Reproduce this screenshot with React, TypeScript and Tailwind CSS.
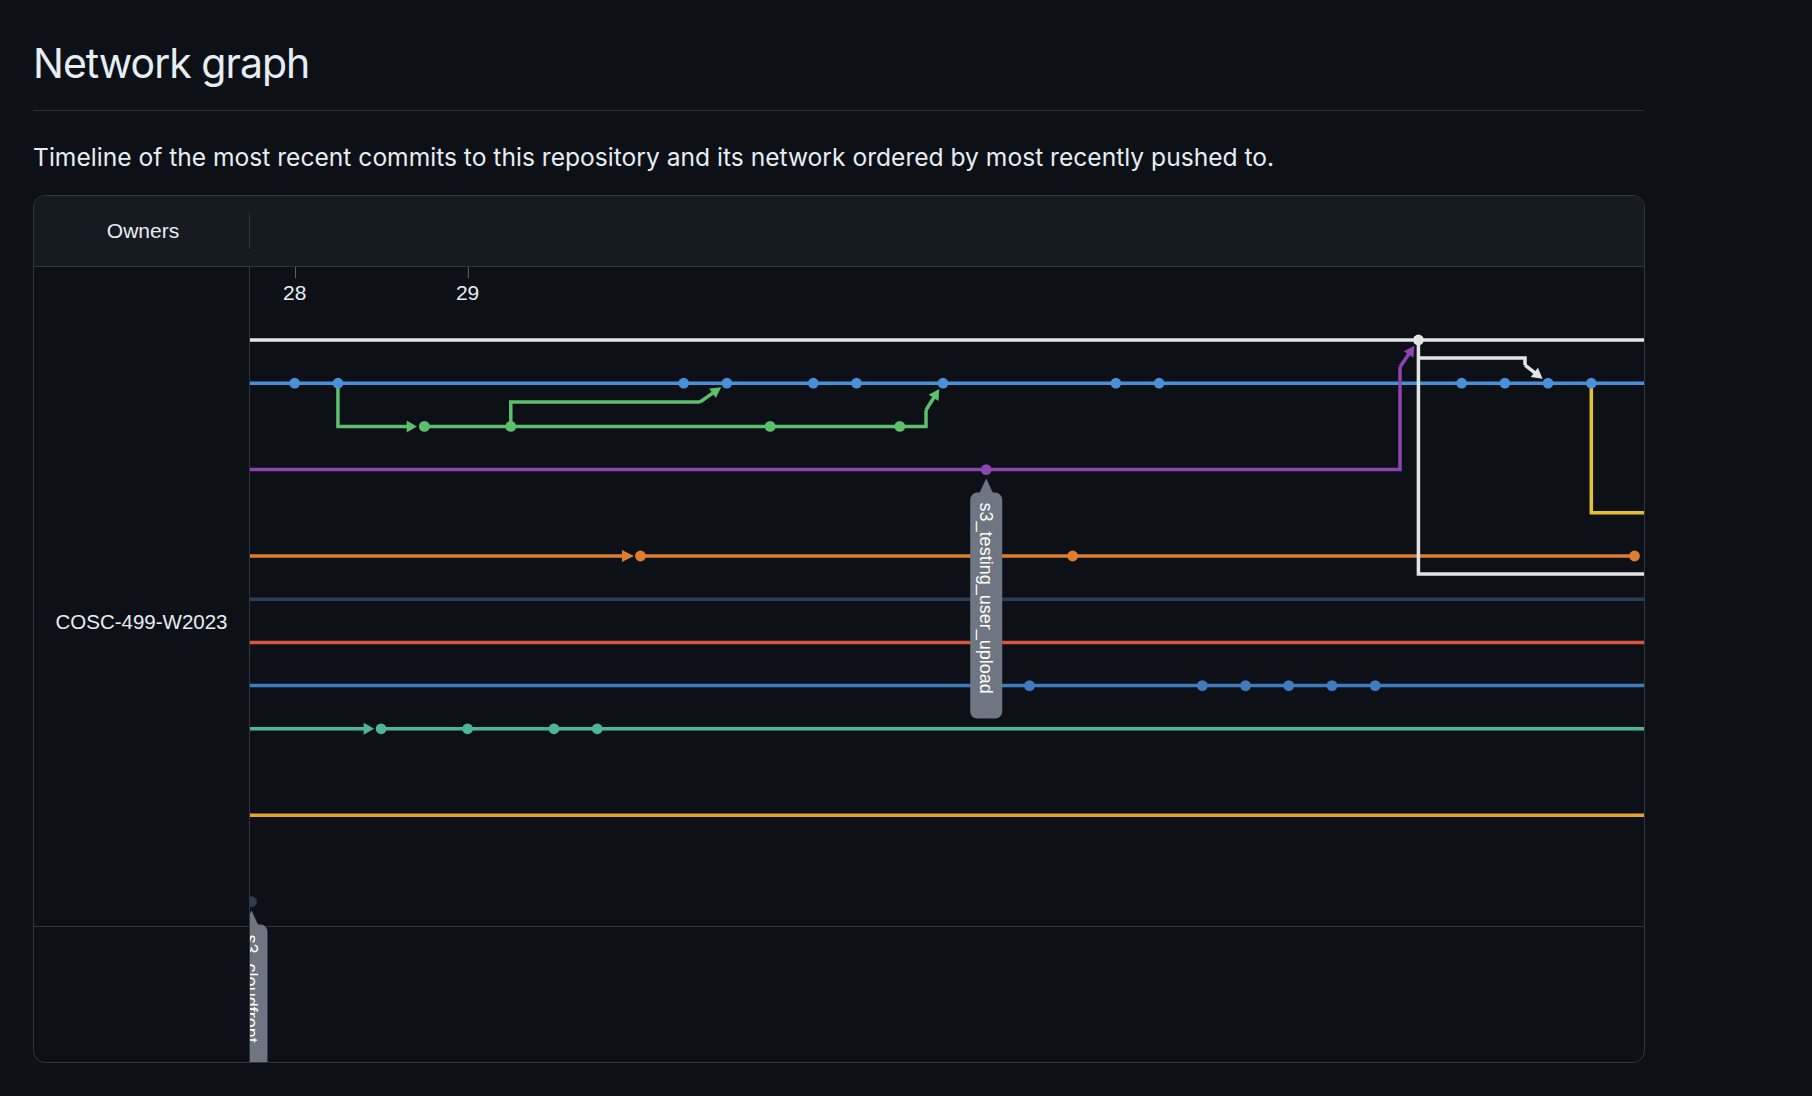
import React from "react";

// graph grid, in page pixels
const X = (k: number) => 294.7 + 43.22 * k;
const Y = (j: number) => 340 + 43.2 * j;
const RIGHT = 1644;
const LEFT = 249;

const C = {
  white: "#e2e4e8",
  blue: "#4a90d9",
  green: "#5cbf6c",
  purple: "#8e44ad",
  yellow: "#e6c12f",
  orange: "#dc7f33",
  slate: "#2c3e50",
  red: "#dc5340",
  blue2: "#3f7cbf",
  teal: "#4db795",
  amber: "#e8a030",
};

const SW = 3.5;
const R = 5.4;

function Dot({ k, j, color }: { k: number; j: number; color: string }) {
  return <circle cx={X(k)} cy={Y(j)} r={R} fill={color} />;
}

// arrow ending at a commit dot, coming from (fx, fy)
function Arrow({ fx, fy, tx, ty, color }: { fx: number; fy: number; tx: number; ty: number; color: string }) {
  const dx = tx - fx;
  const dy = ty - fy;
  const len = Math.hypot(dx, dy);
  const ux = dx / len;
  const uy = dy / len;
  const tipX = tx - ux * 7;
  const tipY = ty - uy * 7;
  const bX = tx - ux * 17.5;
  const bY = ty - uy * 17.5;
  const hw = 5.8;
  return (
    <g>
      <line x1={fx} y1={fy} x2={bX + ux * 2} y2={bY + uy * 2} stroke={color} strokeWidth={SW} />
      <polygon
        points={`${tipX},${tipY} ${bX - uy * hw},${bY + ux * hw} ${bX + uy * hw},${bY - ux * hw}`}
        fill={color}
      />
    </g>
  );
}

function Label({ cx, dotY, h, text }: { cx: number; dotY: number; h: number; text: string }) {
  const top = dotY + 23;
  return (
    <g>
      <polygon points={`${cx},${dotY + 9} ${cx - 7},${top + 1} ${cx + 7},${top + 1}`} fill="#6e7681" />
      <rect x={cx - 16} y={top} width={32} height={h} rx={7} fill="#6e7681" />
      <text
        transform={`translate(${cx} ${top + 10}) rotate(90)`}
        dominantBaseline="central"
        fill="#ffffff"
        fontSize={18}
        fontFamily="'Liberation Sans', Arial, sans-serif"
      >
        {text}
      </text>
    </g>
  );
}

function Graph() {
  const full = (j: number, color: string) => (
    <line x1={LEFT} y1={Y(j)} x2={RIGHT} y2={Y(j)} stroke={color} strokeWidth={SW} />
  );

  return (
    <svg className="block" width={1394} height={795} viewBox="250 267 1394 795">
      {/* separator under the owner block */}
      <line x1={LEFT} y1={926.5} x2={RIGHT} y2={926.5} stroke="#30363d" strokeWidth={1} />

      {/* day ticks */}
      {[
        { k: 0, d: "28" },
        { k: 4, d: "29" },
      ].map((t) => (
        <g key={t.d}>
          <line x1={X(t.k) + 0.8} y1={267} x2={X(t.k) + 0.8} y2={278} stroke="#5a626c" strokeWidth={1} />
          <text
            x={X(t.k)}
            y={300}
            textAnchor="middle"
            fill="#e6edf3"
            fontSize={21}
            fontFamily="'Liberation Sans', Arial, sans-serif"
          >
            {t.d}
          </text>
        </g>
      ))}

      {/* branch lines */}
      {full(1, C.blue)}
      {full(6, C.slate)}
      {full(7, C.red)}
      {full(8, C.blue2)}
      {full(11, C.amber)}

      {/* green feature branch */}
      <path
        d={`M${X(1)} ${Y(1)} V${Y(2)} H${X(3) - 16}`}
        fill="none"
        stroke={C.green}
        strokeWidth={SW}
      />
      <polygon points={`${X(3) - 7.5},${Y(2)} ${X(3) - 17.7},${Y(2) - 6} ${X(3) - 17.7},${Y(2) + 6}`} fill={C.green} />
      <path d={`M${X(3)} ${Y(2)} H926 V410`} fill="none" stroke={C.green} strokeWidth={SW} strokeLinejoin="miter" />
      <Arrow fx={926} fy={410} tx={X(15)} ty={Y(1)} color={C.green} />
      <path d={`M${X(5)} ${Y(2)} V402 H700`} fill="none" stroke={C.green} strokeWidth={SW} />
      <Arrow fx={700} fy={402} tx={X(10)} ty={Y(1)} color={C.green} />

      {/* purple */}
      <path d={`M${LEFT} ${Y(3)} H1400 V367`} fill="none" stroke={C.purple} strokeWidth={SW} />
      <Arrow fx={1400} fy={367} tx={X(26)} ty={Y(0)} color={C.purple} />

      {/* yellow */}
      <path d={`M${X(30)} ${Y(1)} V${Y(4)} H${RIGHT}`} fill="none" stroke={C.yellow} strokeWidth={SW} />

      {/* orange */}
      <line x1={LEFT} y1={Y(5)} x2={X(8) - 16} y2={Y(5)} stroke={C.orange} strokeWidth={SW} />
      <polygon points={`${X(8) - 6.5},${Y(5)} ${X(8) - 18.5},${Y(5) - 6} ${X(8) - 18.5},${Y(5) + 6}`} fill={C.orange} />
      <line x1={X(8)} y1={Y(5)} x2={X(31)} y2={Y(5)} stroke={C.orange} strokeWidth={SW} />

      {/* teal */}
      <line x1={LEFT} y1={Y(9)} x2={X(2) - 16} y2={Y(9)} stroke={C.teal} strokeWidth={SW} />
      <polygon points={`${X(2) - 7},${Y(9)} ${X(2) - 17.5},${Y(9) - 6} ${X(2) - 17.5},${Y(9) + 6}`} fill={C.teal} />
      <line x1={X(2)} y1={Y(9)} x2={RIGHT} y2={Y(9)} stroke={C.teal} strokeWidth={SW} />

      {/* dots */}
      {[0, 1, 9, 10, 12, 13, 15, 19, 20, 27, 28, 29, 30].map((k) => (
        <Dot key={"b" + k} k={k} j={1} color={C.blue} />
      ))}
      {[3, 5, 11, 14].map((k) => (
        <Dot key={"g" + k} k={k} j={2} color={C.green} />
      ))}
      <Dot k={16} j={3} color={C.purple} />
      {[8, 18, 31].map((k) => (
        <Dot key={"o" + k} k={k} j={5} color={C.orange} />
      ))}
      {[17, 21, 22, 23, 24, 25].map((k) => (
        <Dot key={"b2" + k} k={k} j={8} color={C.blue2} />
      ))}
      {[2, 4, 6, 7].map((k) => (
        <Dot key={"t" + k} k={k} j={9} color={C.teal} />
      ))}
      <Dot k={-1} j={13} color={C.slate} />

      {/* master (white) drawn last */}
      {full(0, C.white)}
      <path d={`M${X(26)} ${Y(0)} V574 H${RIGHT}`} fill="none" stroke={C.white} strokeWidth={SW} />
      <path d={`M${X(26)} 358 H1525 V365`} fill="none" stroke={C.white} strokeWidth={SW} />
      <Arrow fx={1525} fy={365} tx={X(29)} ty={Y(1)} color={C.white} />
      <Dot k={26} j={0} color={C.white} />

      {/* ref labels */}
      <Label cx={X(16)} dotY={Y(3)} h={226} text="s3_testing_user_upload" />
      <Label cx={X(-1)} dotY={Y(13)} h={200} text="s3_cloudfront" />
    </svg>
  );
}

export default function App() {
  return (
    <div className="min-h-screen w-full bg-[#0d1117] pl-[33px] pr-[168px] text-[#e6edf3] [font-family:Inter,'Noto_Sans',sans-serif]">
      <h2 className="border-b border-[#2a2f36] pt-[43px] pb-[26px] text-[41px] leading-[41px] font-normal tracking-[-1px]">
        Network graph
      </h2>

      <p className="mt-[34px] text-[24.6px] leading-[25px]">
        Timeline of the most recent commits to this repository and its network ordered by most recently pushed to.
      </p>

      <div className="mt-[25px] w-[1612px] overflow-hidden rounded-[12px] border border-[#30363d]">
        {/* header */}
        <div className="flex h-[71px] items-center border-b border-[#30363d] bg-[#161b22]">
          <div className="w-[215px] pl-[3px] text-center text-[21px] [font-family:'Liberation_Sans',Arial,sans-serif]">
            Owners
          </div>
          <div className="h-[36px] w-px bg-[#30363d]" />
        </div>

        {/* body */}
        <div className="flex">
          <div className="w-[216px] shrink-0 border-r border-[#30363d]">
            <div className="h-[660px] border-b border-[#30363d] pt-[345px] text-center text-[20.5px] leading-[20.5px] [font-family:'Liberation_Sans',Arial,sans-serif]">
              COSC-499-W2023
            </div>
          </div>
          <Graph />
        </div>
      </div>
    </div>
  );
}
